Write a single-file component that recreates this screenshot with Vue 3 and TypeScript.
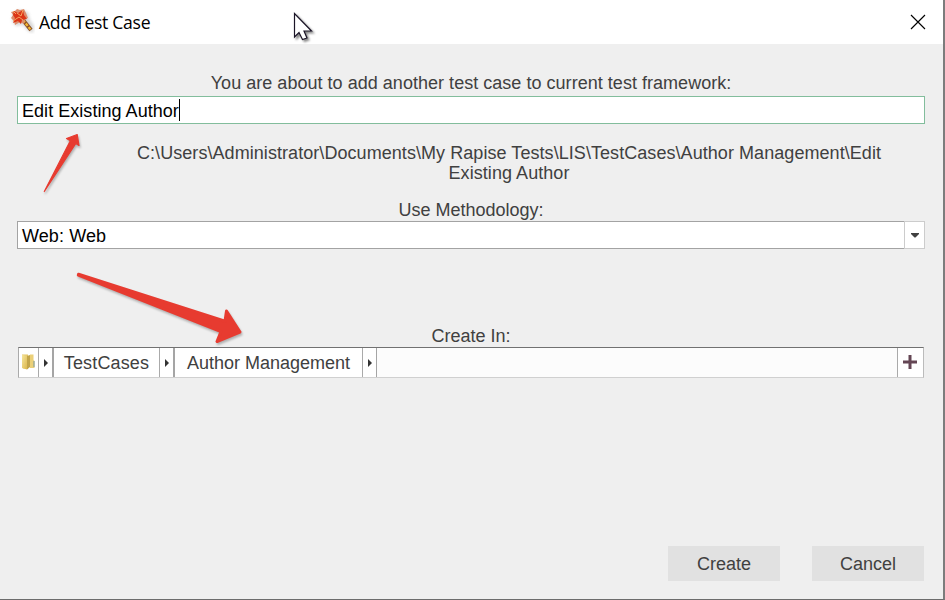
<script setup lang="ts">
import { ref } from 'vue'

const testName = ref('Edit Existing Author')
const methodology = ref('Web: Web')
const path: string[] = [
  'C:\\Users\\Administrator\\Documents\\My Rapise Tests\\LIS\\TestCases\\Author Management\\Edit',
  'Existing Author',
]
</script>

<template>
  <div class="window">
    <header class="titlebar">
      <svg class="logo" width="26" height="28" viewBox="0 0 26 28">
        <path class="shade" d="M4 7l6-3 9 2 2 8 4 6-1 7-5-2-5-6-7 1-4-5z" />
        <path d="M14 14l8 10" stroke="#8b5128" stroke-width="4" />
        <path d="M14 14l7.500 9.500" stroke="#f4b934" stroke-width="2.200" stroke-dasharray="3 1.500" />
        <path d="M2 6l4-1 2-2 3 1 4-1 2 4 2 5-3 1-1 5-4-2-5 3-1-4-3-3 2-3z" fill="#dc8d6c" />
        <path d="M5 5l4 2 5-3 1 5 3 4-5 1-1 4-3-3-5 2 2-5-2-3z" fill="#dc3516" />
        <path d="M4 5l3 3m7-4l-2 6-4-3m-4 8l6-4 4 3" stroke="#f7a35f" stroke-width="1" fill="none" />
      </svg>
      <h1>Add Test Case</h1>
      <button class="close" aria-label="Close">
        <svg width="16" height="16" viewBox="0 0 16 16"><path d="M1 1l14 14M15 1L1 15" stroke="#000" stroke-width="1.150" /></svg>
      </button>
    </header>

    <main>
      <p class="label intro">You are about to add another test case to current test framework:</p>
      <div class="field name">{{ testName }}<i class="caret"></i></div>
      <p class="label location"><span v-for="line in path" :key="line">{{ line }}</span></p>
      <p class="label">Use Methodology:</p>
      <div class="combo">
        <div class="value">{{ methodology }}</div>
        <div class="drop"><svg width="8" height="5" viewBox="0 0 8 5"><path d="M0 0h8v1L4.500 4.500h-1L0 1z" fill="#404040" /></svg></div>
      </div>
      <p class="label create-in">Create In:</p>
      <div class="crumbs">
        <div class="folder">
          <svg width="15" height="18" viewBox="0 0 15 18">
            <defs>
              <linearGradient id="front" x2="1" y2="1"><stop stop-color="#f5e59c" /><stop offset="1" stop-color="#dcb74c" /></linearGradient>
            </defs>
            <path d="M1 1.500h6v14H2L1 14z" fill="#e3c566" />
            <path d="M1 2l5 .5v14L1 15z" fill="url(#front)" />
            <path d="M6 3l3-1v12l-3 2.500z" fill="#c2a54a" />
            <path d="M9 1.500h3.500V7l1 1v7H9z" fill="#ebd078" />
            <path d="M13 8v6" stroke="#7699a0" />
          </svg>
        </div>
        <div class="arrow bar"><i></i></div>
        <div class="crumb cases">TestCases</div>
        <div class="arrow bar"><i></i></div>
        <div class="crumb author">Author Management</div>
        <div class="arrow"><i></i></div>
        <div class="rest"></div>
        <div class="add"><svg width="14" height="14" viewBox="0 0 14 14"><path d="M0 7h14M7 0v14" stroke="#644654" stroke-width="3" /></svg></div>
      </div>
    </main>

    <footer>
      <button>Create</button>
      <button>Cancel</button>
    </footer>

    <svg class="overlay" width="945" height="600" viewBox="0 0 945 600">
      <g class="marker">
        <path d="M44.300 191.500L70.300 140.800L66.500 138.500L77.200 134.500L79 145.500L75.800 143.500Z" />
        <path class="large" d="M78.500 274.200L225 321.200L226.500 311L240 332L217 341.500L221 331.500L78.300 275.200Z" />
      </g>
      <path class="pointer" d="M294.500 13.500V37L299 32.500L302.500 39.500L307 38L304 31H311.500Z" />
    </svg>
  </div>
</template>

<style>
body { background: #efefef; overflow: hidden; }
</style>

<style scoped>
* { box-sizing: border-box; }
.window {
  position: relative;
  display: flex;
  flex-direction: column;
  width: 945px;
  height: 600px;
  border-right: 2px solid #7c7c7c;
  border-bottom: 1px solid #6c6c6c;
  background: #efefef;
  color: #404040;
  font: 18px/20px "Liberation Sans", Arial, sans-serif;
}
.titlebar { display: flex; height: 44px; padding-left: 9px; background: #fff; }
.logo { margin-top: 6px; }
.shade { fill: #aaa; opacity: .45; filter: blur(1.5px); }
h1 { margin: 0 0 0 4px; color: #000; font: 17.6px/45px "Open Sans", "Noto Sans", sans-serif; letter-spacing: -.3px; }
.close { display: flex; margin: 14px 16px 0 auto; padding: 0; border: 0; background: none; width: 17px; height: 16px; }
main { display: flex; flex-direction: column; padding: 29px 18px 0 17px; }
.label { margin: 0; text-align: center; white-space: nowrap; }
.intro { margin-bottom: 3px; letter-spacing: .03px; }
.field { display: flex; align-items: center; height: 28px; padding: 2px 0 0 4px; border: 1px solid #82bd9c; background: #fff; color: #000; letter-spacing: .04px; }
.caret { width: 1px; height: 22px; margin-top: -2px; background: #000; }
.location { display: flex; flex-direction: column; margin: 19px 0 17px; padding-left: 76px; letter-spacing: .06px; }
.combo { display: flex; height: 28px; margin-top: 1px; background: #fff; color: #000; }
.value { flex: 1; padding: 4px 4px 0; border: 1px solid #a3a3a3; border-right: 0; letter-spacing: .1px; }
.drop { display: flex; align-items: center; justify-content: center; width: 21px; border: 1px solid #ccc; }
.create-in { margin-top: 77px; }
.crumbs { display: flex; width: 906px; height: 31px; margin: 1px 0 0 1px; border: solid #717171; border-width: 1px; border-left-color: #aaa; border-right-color: #bbb; border-bottom-color: #d0d0d0; background: #fff; }
.folder { width: 20px; padding: 5px 0 0 2px; border-right: 1px solid #aaa; }
.arrow { display: flex; align-items: center; width: 14px; padding-left: 5px; border-right: 1px solid #a5a5a5; }
.arrow.bar { width: 15px; border-right: 2px solid #a5a5a5; }
.arrow i { border: 4px solid transparent; border-left-color: #333; border-right: 0; }
.crumb { padding-top: 5px; border-right: 1px solid #aaa; text-align: center; }
.cases { width: 106px; letter-spacing: .15px; }
.author { width: 188px; }
.rest { flex: 1; background: #fcfcfc; border-right: 1px solid #aaa; }
.add { display: flex; align-items: center; justify-content: center; width: 25px; padding: 0 2px 2px 0; }
footer { display: flex; gap: 32px; justify-content: flex-end; margin-top: auto; padding: 0 19px 18px 0; }
footer button { width: 112px; height: 35px; padding: 1px 0 0; border: 0; background: #e1e1e1; color: #404040; font: inherit; }
.overlay { position: absolute; top: 0; left: 0; pointer-events: none; }
.marker { fill: #e73b30; stroke: #e73b30; stroke-width: 1.2; stroke-linejoin: round; filter: drop-shadow(1px 2px 1px #0004); }
.large { stroke-width: 3; }
.pointer { fill: #fff; stroke: #1b1527; stroke-width: 1.2; filter: drop-shadow(2px 2px 1px #0007); }
</style>
